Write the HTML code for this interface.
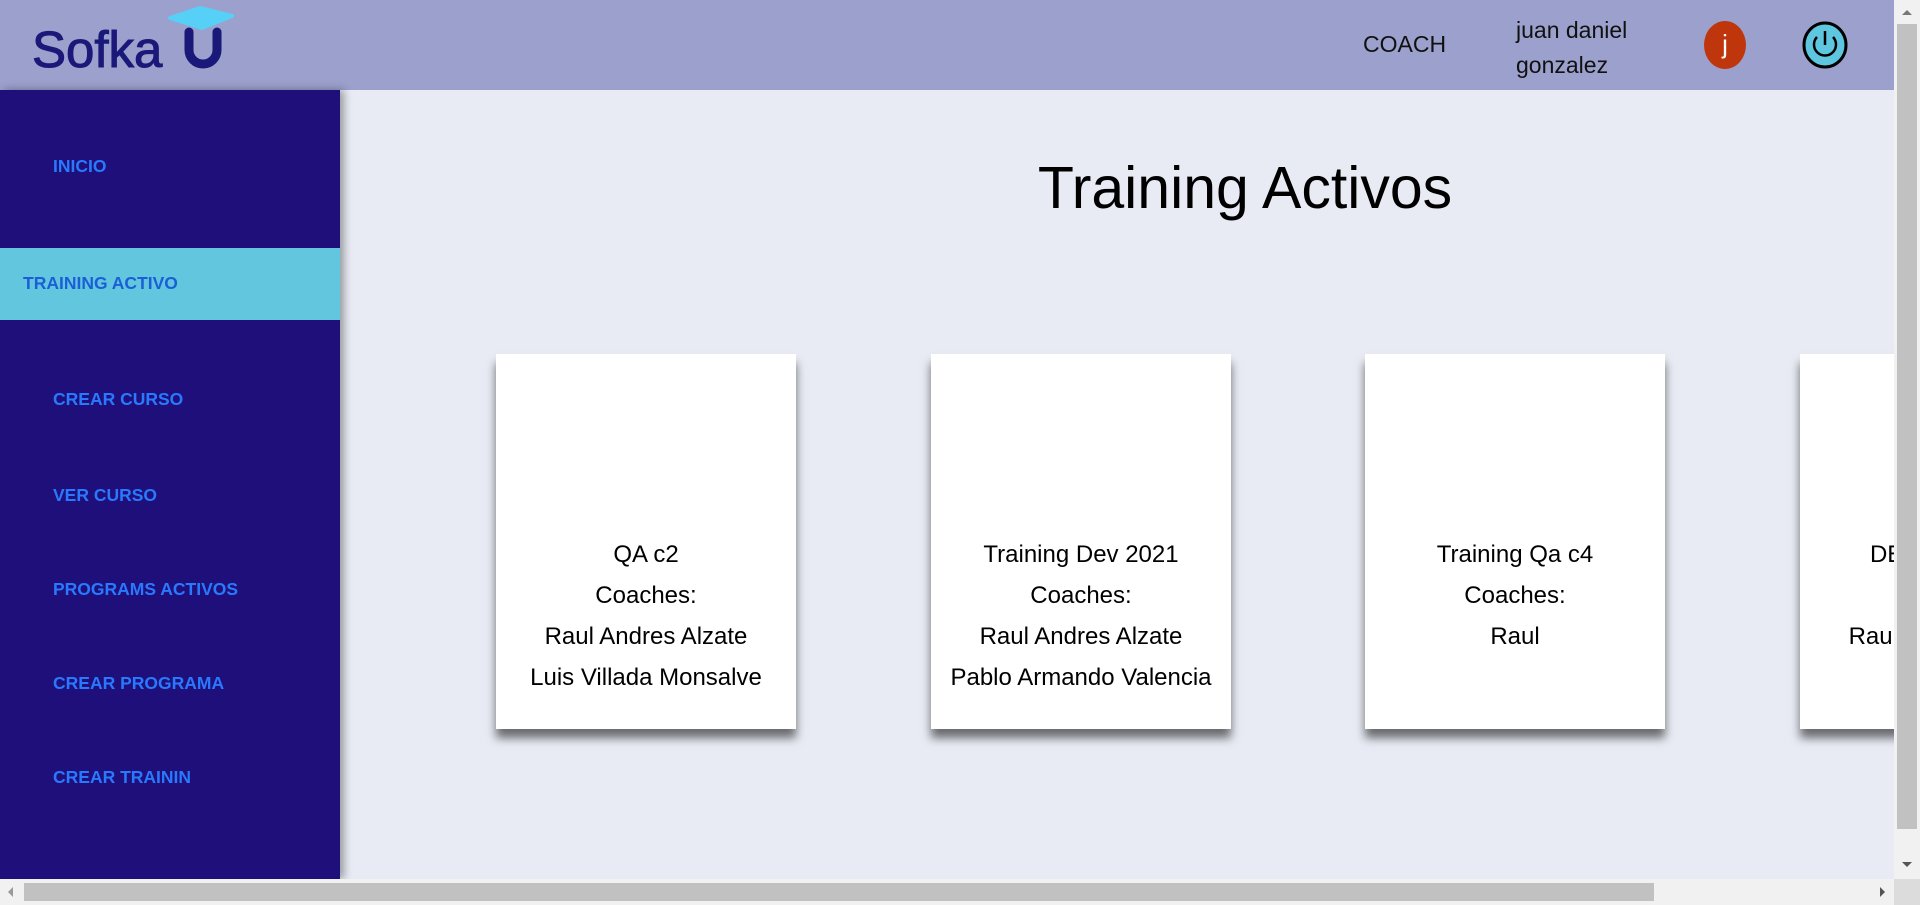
<!DOCTYPE html>
<html><head><meta charset="utf-8"><style>
*{margin:0;padding:0;box-sizing:border-box}
body{width:1920px;height:905px;overflow:hidden;background:#e8ebf4;font-family:"Liberation Sans",Arial,sans-serif;position:relative}
.hdr{position:absolute;left:0;top:0;width:1894px;height:90px;background:#9ba0cc}
.side{position:absolute;left:0;top:90px;width:340px;height:789px;background:#1f0f7a;box-shadow:4px 0 8px rgba(0,0,0,.35)}
.mi{position:absolute;left:53px;font-weight:bold;font-size:17.5px;color:#2979ff}
.act{position:absolute;left:0;top:158px;width:340px;height:72px;background:#62c6de}
.title{position:absolute;left:845px;width:800px;top:154px;text-align:center;font-size:59px;color:#000}
.clip{position:absolute;left:0;top:0;width:1894px;height:879px;overflow:hidden}
.card{position:absolute;top:354px;width:300px;height:375px;background:#fff;box-shadow:0 9px 9px rgba(0,0,0,.55);text-align:center;font-size:24px;line-height:41px;padding-top:180px;color:#000;white-space:nowrap}
.vs{position:absolute;left:1894px;top:0;width:26px;height:879px;background:#f1f1f1}
.hs{position:absolute;left:0;top:879px;width:1920px;height:26px;background:#f1f1f1}
</style></head><body>
<div class="hdr">
 <div style="position:absolute;left:32px;top:20px;font-size:51px;color:#1a1878;-webkit-text-stroke:1px #1a1878">Sofka</div>
 <svg style="position:absolute;left:166px;top:4px" width="75" height="70">
  <path d="M4 14 L34 4 L66 12 L36 24 Z" fill="#56d0f7" stroke="#56d0f7" stroke-width="4" stroke-linejoin="round"/>
  <path d="M23 28 V46 A14 14 0 0 0 51 46 V28" fill="none" stroke="#1a1878" stroke-width="9" stroke-linecap="round"/>
 </svg>
 <div style="position:absolute;left:1363px;top:31px;font-size:23px;color:#111">COACH</div>
 <div style="position:absolute;left:1516px;top:13px;font-size:23px;line-height:35px;color:#111">juan daniel<br>gonzalez</div>
 <div style="position:absolute;left:1704px;top:21px;width:42px;height:48px;border-radius:50%;background:#bf360c;color:#fff;font-size:26px;text-align:center;line-height:46px">j</div>
 <svg style="position:absolute;left:1802px;top:21px" width="46" height="48"><ellipse cx="23" cy="24" rx="21" ry="22" fill="#5ec6df" stroke="#000" stroke-width="3"/><path d="M15 16 A11 11 0 1 0 31 16" fill="none" stroke="#000" stroke-width="2.5"/><path d="M23 10 V24" stroke="#000" stroke-width="2.5"/></svg>
</div>
<div class="side">
 <div class="act"></div>
 <div class="mi" style="top:66px">INICIO</div>
 <div class="mi" style="top:183px;left:23px;color:#1a5fd6">TRAINING ACTIVO</div>
 <div class="mi" style="top:299px">CREAR CURSO</div>
 <div class="mi" style="top:395px">VER CURSO</div>
 <div class="mi" style="top:489px">PROGRAMS ACTIVOS</div>
 <div class="mi" style="top:583px">CREAR PROGRAMA</div>
 <div class="mi" style="top:677px">CREAR TRAININ</div>
</div>
<div class="title">Training Activos</div>
<div class="clip">
<div class="card" style="left:496px">QA c2<br>Coaches:<br>Raul Andres Alzate<br>Luis Villada Monsalve</div>
<div class="card" style="left:931px">Training Dev 2021<br>Coaches:<br>Raul Andres Alzate<br>Pablo Armando Valencia</div>
<div class="card" style="left:1365px">Training Qa c4<br>Coaches:<br>Raul</div>
<div class="card" style="left:1800px">DEVOPS 2021<br>Coaches:<br>Raul Andres Alzate</div>
</div>
<div class="vs"><div style="position:absolute;left:3px;top:24px;width:20px;height:805px;background:#c1c1c1"></div><div style="position:absolute;left:8px;top:10px;border:5px solid transparent;border-bottom-color:#777;border-top:0"></div><div style="position:absolute;left:8px;top:862px;border:5px solid transparent;border-top-color:#555;border-bottom:0"></div></div>
<div class="hs"><div style="position:absolute;left:24px;top:4px;width:1630px;height:18px;background:#c1c1c1"></div><div style="position:absolute;left:1880px;top:8px;border:5px solid transparent;border-left-color:#555;border-right:0"></div><div style="position:absolute;left:8px;top:8px;border:5px solid transparent;border-right-color:#999;border-left:0"></div><div style="position:absolute;left:1894px;top:0;width:26px;height:26px;background:#dcdcdc"></div></div>
</body></html>
